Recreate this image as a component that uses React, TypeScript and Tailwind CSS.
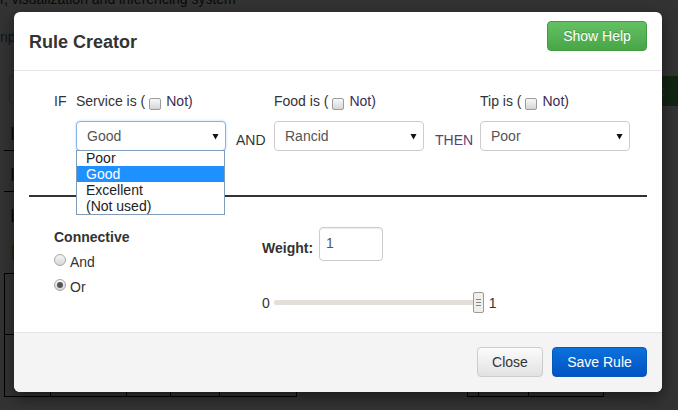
import React from "react";

const Checkbox = () => (
  <span className="ml-[4px] mr-[5px] mt-[7px] inline-block h-[12px] w-[12px] shrink-0 rounded-[2px] border border-[#9c9c9c] bg-gradient-to-b from-[#f8f8f8] to-[#d6d6d6]" />
);

const Arrow = () => (
  <svg width="7" height="7" viewBox="0 0 7 7" className="shrink-0">
    <path d="M0.5 1 H6.5 L3.5 6.5 Z" fill="#111" />
  </svg>
);

function Select({ value, focused }: { value: string; focused?: boolean }) {
  return (
    <div
      className={
        focused
          ? "flex h-[30px] w-[150px] items-center justify-between rounded-[4px] border border-[#86b3e6] bg-white pl-[10px] pr-[6px] text-[14px] leading-[20px] text-[#555] shadow-[0_0_3px_rgba(102,175,233,0.45)]"
          : "flex h-[30px] w-[150px] items-center justify-between rounded-[4px] border border-[#cccccc] bg-white pl-[10px] pr-[6px] text-[14px] leading-[20px] text-[#555]"
      }
    >
      <span>{value}</span>
      <Arrow />
    </div>
  );
}

function Label({ text }: { text: string }) {
  return (
    <div className="flex h-[20px] items-start leading-[20px] text-[#333]">
      <span className="whitespace-pre">{text}</span>
      <Checkbox />
      <span className="text-[#3a2c55]">Not)</span>
    </div>
  );
}

function Radio({ checked }: { checked?: boolean }) {
  return (
    <span className="mr-[4px] mt-[4px] flex h-[12px] w-[12px] shrink-0 items-center justify-center rounded-full border border-[#a6a6a6] bg-gradient-to-b from-[#f6f6f6] to-[#d6d6d6]">
      {checked && <span className="h-[6px] w-[6px] rounded-full bg-[#555]" />}
    </span>
  );
}

export default function App() {
  return (
    <div className="relative h-[410px] w-[678px] overflow-hidden bg-white font-['Liberation_Sans',Arial,sans-serif] text-[14px] text-[#333]">
      {/* page beneath the dialog */}
      <div className="flex h-full flex-col">
        <div className="-mt-[11px] whitespace-nowrap leading-[20px]">r, visualization and inferencing system</div>
        <div className="mt-[18px] leading-[20px] text-[#337ab7]">np</div>
        <div className="mt-[28px] flex items-start justify-between">
          <div className="ml-[9px] h-[29px] w-[60px] rounded-[4px] border border-[#cccccc]" />
          <div className="mt-[1px] h-[30px] w-[30px] bg-[#5cb85c] pl-[2px] leading-[30px] text-white">nc</div>
        </div>
        <div className="mt-[4px] ml-[4px] w-[300px]">
          <div className="h-[41px] border-b border-black pl-[6px] pt-[14px] text-[18px] leading-[20px]">I</div>
          <div className="h-[41px] border-b border-black pl-[6px] pt-[14px] text-[18px] leading-[20px]">I</div>
          <div className="h-[41px] pl-[6px] pt-[14px] text-[18px] leading-[20px]">I</div>
        </div>
        <div className="ml-[12px] mt-[12px] h-[15px] w-[40px] bg-[#f0ad4e]" />
        <div className="mt-[13px] flex items-end">
          <div className="ml-[4px] flex h-[124px] w-[293px] flex-col border border-black">
            <div className="h-[61px] border-b border-black" />
            <div className="flex flex-1">
              <div className="w-[46px] border-r border-black" />
              <div className="w-[76px] border-r border-black" />
              <div className="w-[44px] border-r border-black" />
              <div className="w-[49px] border-r border-black" />
              <div className="flex-1" />
            </div>
          </div>
          <div className="ml-[170px] flex h-[62px] w-[137px] border border-black">
            <div className="w-[11px] border-r border-black" />
            <div className="w-[50px] border-r border-black" />
            <div className="flex-1" />
          </div>
        </div>
      </div>

      {/* backdrop */}
      <div className="absolute inset-0 bg-black/80" />

      {/* dialog */}
      <div className="absolute left-[14px] top-[12px] flex h-[380px] w-[648px] flex-col overflow-hidden rounded-[6px] bg-white shadow-[0_5px_15px_rgba(0,0,0,0.5)]">
        {/* header */}
        <div className="flex h-[59px] shrink-0 items-start justify-between border-b border-[#e5e5e5] px-[15px]">
          <div className="mt-[17px] text-[18px] font-bold leading-[26px] text-[#333]">Rule Creator</div>
          <button className="mt-[9px] h-[30px] w-[100px] rounded-[4px] border border-[#419a41] bg-gradient-to-b from-[#63c163] to-[#48a648] text-[14px] text-white [text-shadow:0_-1px_0_rgba(0,0,0,0.2)]">
            Show Help
          </button>
        </div>

        {/* body */}
        <div className="h-[261px] shrink-0 px-[15px] pt-[20px]">
          <div className="flex items-start pl-[25px]">
            <div className="w-[22px] leading-[20px] text-[#333]">IF</div>
            <div className="relative w-[150px]">
              <Label text="Service is (" />
              <div className="mt-[10px]">
                <Select value="Good" focused />
              </div>
              <div className="absolute left-0 top-[59px] w-[149px] border border-[#7f9db9] bg-white text-[14px] leading-[16px] text-[#222]">
                <div className="h-[15px] pl-[9px] leading-[15px]">Poor</div>
                <div className="h-[16px] bg-[#1e90ff] pl-[9px] text-white">Good</div>
                <div className="h-[16px] pl-[9px]">Excellent</div>
                <div className="h-[16px] pl-[9px]">(Not used)</div>
              </div>
            </div>
            <div className="ml-[10px] mt-[39px] w-[38px] leading-[20px] text-[#333]">AND</div>
            <div className="w-[150px]">
              <Label text="Food is (" />
              <div className="mt-[10px]">
                <Select value="Rancid" />
              </div>
            </div>
            <div className="ml-[11px] mt-[39px] w-[45px] leading-[20px] text-[#5b3f7a]">THEN</div>
            <div className="w-[150px]">
              <Label text="Tip is (" />
              <div className="mt-[10px]">
                <Select value="Poor" />
              </div>
            </div>
          </div>

          <div className="mt-[44px] border-t-2 border-[#333]" />

          <div className="flex items-start pl-[25px] pt-[28px]">
            <div className="w-[208px]">
              <div className="font-bold leading-[25px] text-[#333]">Connective</div>
              <div className="flex h-[25px] items-start leading-[25px] text-[#333]">
                <Radio />
                <span>And</span>
              </div>
              <div className="flex h-[25px] items-start leading-[25px] text-[#333]">
                <Radio checked />
                <span>Or</span>
              </div>
            </div>
            <div className="mt-[2px]">
              <div className="flex items-start">
                <span className="mr-[6px] mt-[11px] font-bold leading-[20px] text-[#333]">Weight:</span>
                <div className="h-[34px] w-[64px] rounded-[4px] border border-[#cccccc] pl-[6px] pt-[5px] leading-[20px] text-[#555] shadow-[inset_0_1px_1px_rgba(0,0,0,0.075)]">
                  1
                </div>
              </div>
              <div className="mt-[31px] flex h-[21px] items-center">
                <span className="leading-[20px] text-[#333]">0</span>
                <div className="relative ml-[4px] flex h-[21px] w-[210px] items-center">
                  <div className="mr-[5px] h-[5px] flex-1 rounded-[2px] bg-[#e3ded7]" />
                  <div className="absolute right-0 top-0 flex h-[21px] w-[11px] flex-col items-center justify-center gap-[2px] rounded-[2px] border border-[#9f9a94] bg-[#f1efeb]">
                    <span className="h-[1px] w-[5px] bg-[#8a8580]" />
                    <span className="h-[1px] w-[5px] bg-[#8a8580]" />
                    <span className="h-[1px] w-[5px] bg-[#8a8580]" />
                  </div>
                </div>
                <span className="ml-[5px] leading-[20px] text-[#333]">1</span>
              </div>
            </div>
          </div>
        </div>

        {/* footer */}
        <div className="flex flex-1 items-start justify-end gap-[9px] border-t border-[#e5e5e5] bg-[#f4f4f4] pr-[15px] pt-[14px]">
          <button className="h-[30px] w-[66px] rounded-[4px] border border-[#cccccc] bg-gradient-to-b from-[#fbfbfb] to-[#e2e2e2] text-[14px] text-[#333]">
            Close
          </button>
          <button className="h-[30px] w-[95px] rounded-[4px] border border-[#0a57b6] bg-gradient-to-b from-[#0d71db] to-[#0253c3] text-[14px] text-white">
            Save Rule
          </button>
        </div>
      </div>
    </div>
  );
}
